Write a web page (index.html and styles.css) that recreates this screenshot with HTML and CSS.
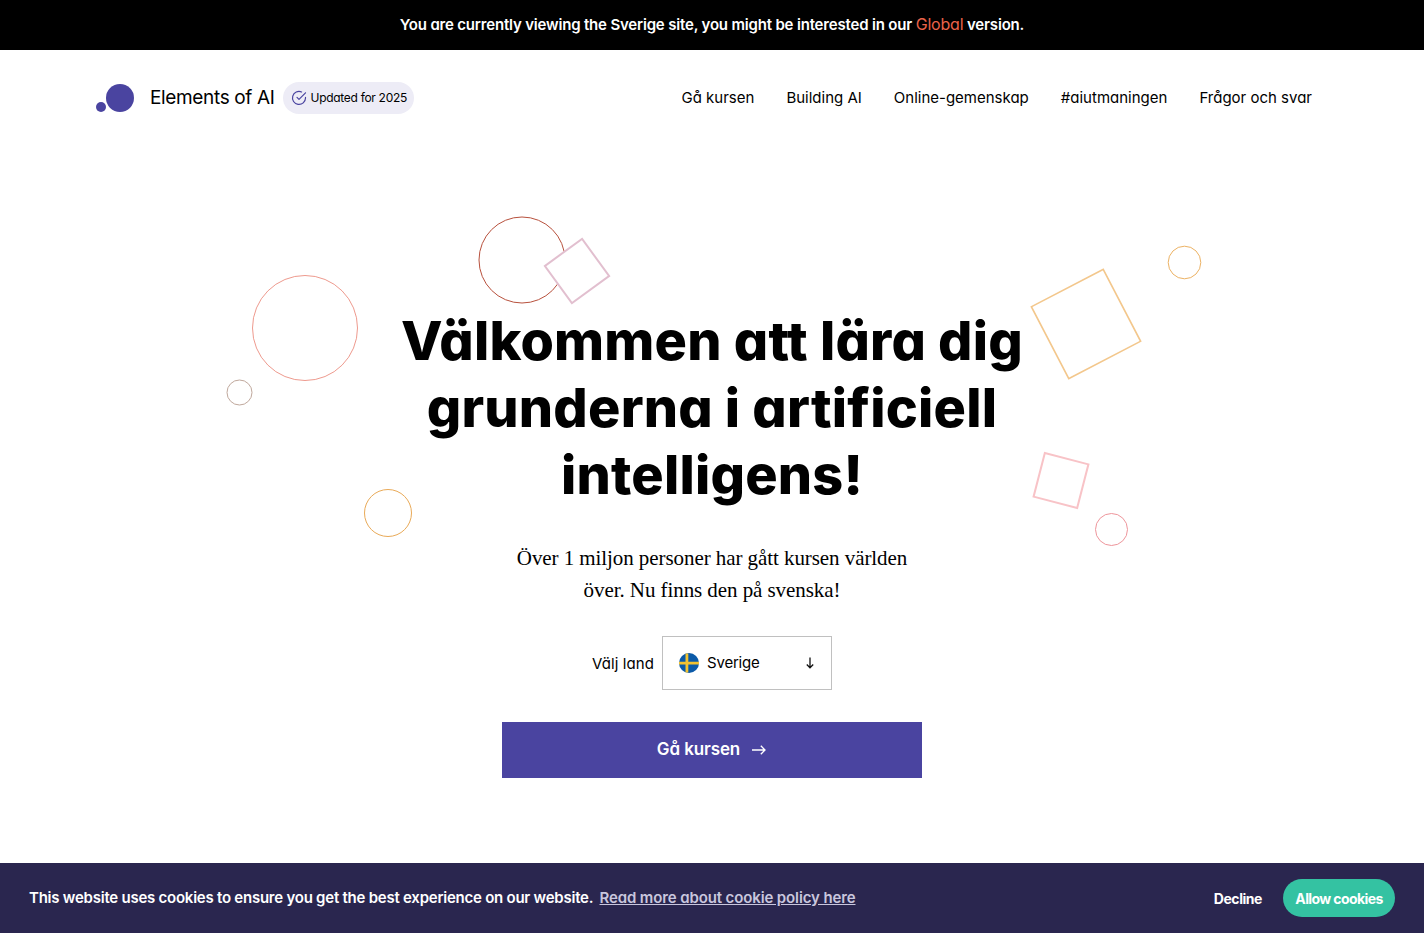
FILE: index.html
```html
<!DOCTYPE html>
<html lang="sv">
    <head>
        <meta charset="utf-8">
        <title>Elements of AI</title>
        <link rel="stylesheet" href="styles.css">
    </head>
    <body>
        <div class="site-banner">
            You are currently viewing the Sverige site, you might be interested in our <a href="#">Global</a> version.
        </div>
        <header class="nav">
            <a class="brand" href="#">
                <svg class="brand-logo" width="38" height="30" viewBox="0 0 38 30">
                    <circle cx="5" cy="24" r="5" fill="#4a44a0"/>
                    <circle cx="24" cy="15" r="14" fill="#4a44a0"/>
                </svg>
                <span class="brand-name">Elements of AI</span>
            </a>
            <span class="badge">
                <svg width="16" height="16" viewBox="0 0 16 16" fill="none" stroke="#4a44a0" stroke-width="1.2" stroke-linecap="round" stroke-linejoin="round">
                    <path d="M14.5 7.4v.6a6.5 6.5 0 1 1-3.9-6"/>
                    <path d="M14.5 2.8 8 9.4 6 7.4"/>
                </svg>
                <span class="badge-text">Updated for 2025</span>
            </span>
            <nav class="nav-links">
                <a href="#">Gå kursen</a>
                <a href="#">Building AI</a>
                <a href="#">Online-gemenskap</a>
                <a href="#">#aiutmaningen</a>
                <a href="#">Frågor och svar</a>
            </nav>
        </header>
        <main class="hero">
            <svg class="shapes" width="1424" height="400" viewBox="0 0 1424 400" fill="none">
                <circle cx="522" cy="70" r="43" stroke="#b8513d"/>
                <rect x="-23" y="-23" width="46" height="46" transform="translate(577 81) rotate(-36)" fill="#fff" stroke="#e2bfcf" stroke-width="2"/>
                <circle cx="305" cy="138" r="52.5" stroke="#ee9a8e"/>
                <circle cx="239.500" cy="202.500" r="12.500" stroke="#c0a89c"/>
                <circle cx="388" cy="323" r="23.500" stroke="#e9aa58"/>
                <circle cx="1184.500" cy="72.500" r="16.300" stroke="#ecb264"/>
                <rect x="-40.500" y="-40.500" width="81" height="81" transform="translate(1086 134) rotate(-27.500)" stroke="#f3c78c" stroke-width="1.600"/>
                <rect x="-22.500" y="-22.500" width="45" height="45" transform="translate(1061 290.500) rotate(14.500)" stroke="#f8c3c7" stroke-width="2"/>
                <circle cx="1111.500" cy="339.500" r="16" stroke="#ee959b"/>
            </svg>
            <h1>Välkommen att lära dig grunderna i artificiell intelligens!</h1>
            <p class="lead">Över 1 miljon personer har gått kursen världen över. Nu finns den på svenska!</p>
            <div class="country">
                <label>Välj land</label>
                <div class="select">
                    <svg class="flag" width="20" height="20" viewBox="0 0 20 20">
                        <circle cx="10" cy="10" r="10" fill="#0b5aa8"/>
                        <path d="M6.500 0.600h2.800v8.100h10.700v2.700h-10.700v8h-2.800v-8h-6.500v-2.700h6.500z" fill="#f2c230"/>
                    </svg>
                    <span class="select-value">Sverige</span>
                    <svg class="select-arrow" width="10" height="12" viewBox="0 0 10 12" fill="none" stroke="#111" stroke-width="1.300">
                        <path d="M5 0.500v10M1.800 7.500 5 10.800 8.200 7.500"/>
                    </svg>
                </div>
            </div>
            <a class="cta" href="#">
                <span class="cta-text">Gå kursen</span>
                <svg width="16" height="12" viewBox="0 0 16 12" fill="none" stroke="#fff" stroke-width="1.300">
                    <path d="M1 6h13M9.800 1.800 14 6l-4.200 4.200"/>
                </svg>
            </a>
        </main>
        <div class="cookies">
            <p class="cookies-text">This website uses cookies to ensure you get the best experience on our website. <a href="#">Read more about cookie policy here</a></p>
            <button class="btn-decline">Decline</button>
            <button class="btn-allow">Allow cookies</button>
        </div>
    </body>
</html>
```

FILE: styles.css
```css
* {
    box-sizing: border-box;
}
body {
    margin: 0;
    font-family: 'Inter', sans-serif;
    font-feature-settings: 'cv11';
    color: #000;
    background-color: #fff;
    height: 933px;
    overflow: hidden;
}
a {
    color: inherit;
    text-decoration: none;
}
.site-banner {
    height: 50px;
    background-color: #000;
    color: #fff;
    font-size: 15px;
    font-weight: 600;
    letter-spacing: -0.18px;
    line-height: 48px;
    text-align: center;
}
.site-banner a {
    color: #ea6349;
    font-size: 16px;
    font-weight: 400;
}
.nav {
    display: flex;
    align-items: center;
    height: 96px;
    padding: 0 112px 0 96px;
}
.brand {
    display: flex;
    align-items: center;
}
.brand-name {
    margin: 0 0 2px 16px;
    font-size: 19px;
    letter-spacing: -0.35px;
}
.badge {
    display: flex;
    align-items: center;
    height: 32px;
    margin-left: 8px;
    padding: 0 7px 0 8px;
    border-radius: 16px;
    background-color: #edecf6;
    font-size: 12px;
    letter-spacing: -0.3px;
}
.badge-text {
    margin: 0 0 2px 4px;
}
.nav-links {
    display: flex;
    gap: 32px;
    margin-left: auto;
    margin-bottom: 2px;
    font-size: 15px;
}
.hero {
    position: relative;
    display: flex;
    flex-direction: column;
    align-items: center;
    padding-top: 161px;
}
.shapes {
    position: absolute;
    top: 44px;
    left: 0;
}
h1 {
    position: relative;
    width: 680px;
    margin: 0;
    font-size: 54px;
    font-weight: 800;
    letter-spacing: 0.2px;
    line-height: 67px;
    text-align: center;
}
.lead {
    position: relative;
    width: 420px;
    margin: 34px 0 0;
    font-family: 'Liberation Serif', serif;
    font-size: 21px;
    letter-spacing: -0.07px;
    line-height: 32px;
    text-align: center;
}
.country {
    display: flex;
    align-items: center;
    gap: 8px;
    margin-top: 30px;
    font-size: 15px;
    letter-spacing: 0.1px;
}
.select {
    display: flex;
    align-items: center;
    width: 170px;
    height: 54px;
    padding: 0 16px;
    border: 1px solid #c0c0c0;
}
.select-value {
    margin: 0 0 2px 8px;
    letter-spacing: -0.2px;
}
.select-arrow {
    margin-left: auto;
}
.cta {
    display: flex;
    align-items: center;
    justify-content: center;
    gap: 11px;
    width: 420px;
    height: 56px;
    margin-top: 32px;
    background-color: #4a44a0;
    color: #fff;
    font-size: 17px;
    font-weight: 600;
}
.cta-text {
    margin-bottom: 2px;
    letter-spacing: -0.1px;
}
.cookies {
    position: fixed;
    left: 0;
    right: 0;
    bottom: 0;
    display: flex;
    align-items: center;
    height: 70px;
    padding: 0 29px;
    background-color: #2a264f;
    color: #fff;
    font-size: 15px;
    font-weight: 600;
    letter-spacing: -0.24px;
}
.cookies-text {
    margin: 0 0 2px;
}
.cookies-text a {
    margin-left: 3px;
    color: #c9c6de;
    letter-spacing: -0.12px;
    text-decoration: underline;
}
.btn-decline,
.btn-allow {
    border: 0;
    font-family: inherit;
    font-size: 14px;
    font-weight: 700;
    letter-spacing: -0.45px;
    color: #fff;
    cursor: pointer;
}
.btn-decline {
    margin-left: auto;
    padding: 0 21px;
    background: none;
}
.btn-allow {
    width: 112px;
    height: 38px;
    border-radius: 19px;
    background-color: #34c2a2;
    letter-spacing: -0.6px;
}
```
